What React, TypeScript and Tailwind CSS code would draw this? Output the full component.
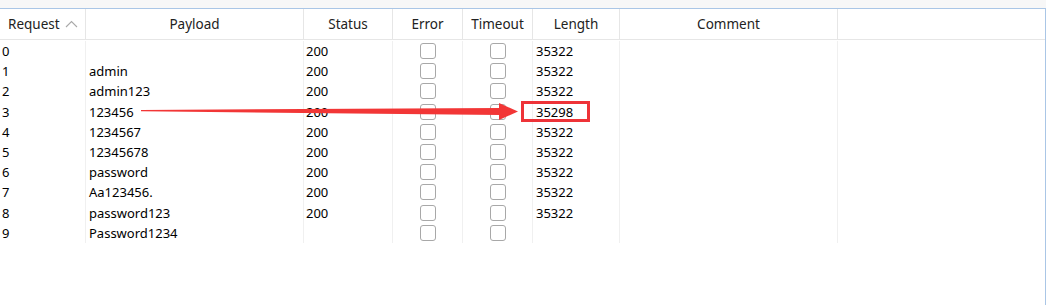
import React from "react";

type Row = {
  id: number;
  payload: string;
  status: string;
  length: string;
};

const rows: Row[] = [
  { id: 0, payload: "", status: "200", length: "35322" },
  { id: 1, payload: "admin", status: "200", length: "35322" },
  { id: 2, payload: "admin123", status: "200", length: "35322" },
  { id: 3, payload: "123456", status: "200", length: "35298" },
  { id: 4, payload: "1234567", status: "200", length: "35322" },
  { id: 5, payload: "12345678", status: "200", length: "35322" },
  { id: 6, payload: "password", status: "200", length: "35322" },
  { id: 7, payload: "Aa123456.", status: "200", length: "35322" },
  { id: 8, payload: "password123", status: "200", length: "35322" },
  { id: 9, payload: "Password1234", status: "", length: "" },
];

const font = { fontFamily: '"Noto Sans", "Open Sans", sans-serif' };

function Box() {
  return <div className="w-4 h-4 rounded-[3px] border border-[#a8a8a8] bg-white" />;
}

export default function App() {
  return (
    <div className="relative w-[1046px] h-[305px] bg-white overflow-hidden" style={font}>
      {/* top strip */}
      <div className="h-2 bg-[#f7f7f7]" />
      <div className="h-[calc(305px-8px)] border-t border-r border-[#aac6e6]">
        {/* header */}
        <div className="flex h-[31px] border-b border-[#e6e6e6] text-[13.5px] text-[#222]">
          <div className="w-[86px] shrink-0 border-r border-[#e6e6e6] flex items-center pl-[8px] gap-[5px]">
            <span>Request</span>
            <svg width="13" height="8" viewBox="0 0 13 8" className="mt-[-1px]">
              <path d="M1 7 L6.5 1.5 L12 7" fill="none" stroke="#a9a9a9" strokeWidth="1.1" />
            </svg>
          </div>
          <div className="w-[218px] shrink-0 border-r border-[#e6e6e6] flex items-center justify-center">Payload</div>
          <div className="w-[89px] shrink-0 border-r border-[#e6e6e6] flex items-center justify-center">Status</div>
          <div className="w-[70px] shrink-0 border-r border-[#e6e6e6] flex items-center justify-center">Error</div>
          <div className="w-[70px] shrink-0 border-r border-[#e6e6e6] flex items-center justify-center">Timeout</div>
          <div className="w-[87px] shrink-0 border-r border-[#e6e6e6] flex items-center justify-center">Length</div>
          <div className="w-[218px] shrink-0 border-r border-[#e6e6e6] flex items-center justify-center">Comment</div>
          <div className="flex-1" />
        </div>

        {/* rows */}
        <div className="pt-px text-[13px] text-[#000]">
          {rows.map((r) => (
            <div key={r.id} className="flex h-[20.2px] leading-[20px]">
              <div className="w-[86px] shrink-0 border-r border-[#f0f0f0] pl-[2px]">{r.id}</div>
              <div className="w-[218px] shrink-0 border-r border-[#f0f0f0] pl-[3px]">{r.payload}</div>
              <div className="w-[89px] shrink-0 border-r border-[#f0f0f0] pl-[2px]">{r.status}</div>
              <div className="w-[70px] shrink-0 border-r border-[#f0f0f0] flex items-center justify-center">
                <Box />
              </div>
              <div className="w-[70px] shrink-0 border-r border-[#f0f0f0] flex items-center justify-center">
                <Box />
              </div>
              <div className="w-[87px] shrink-0 border-r border-[#f0f0f0] pl-[3px]">{r.length}</div>
              <div className="w-[218px] shrink-0 border-r border-[#f0f0f0]" />
              <div className="flex-1" />
            </div>
          ))}
        </div>
      </div>

      {/* annotation: arrow */}
      <svg className="absolute left-0 top-0 pointer-events-none" width="1046" height="305">
        <polygon points="141,110 500,108 500,115 141,111.2" fill="#f23636" />
        <polygon points="499,103 518,111.5 499,120" fill="#f23636" />
      </svg>
      {/* annotation: highlight box */}
      <div className="absolute left-[521px] top-[101px] w-[69px] h-[21px] border-[3px] border-[#ee3338]" />
    </div>
  );
}
